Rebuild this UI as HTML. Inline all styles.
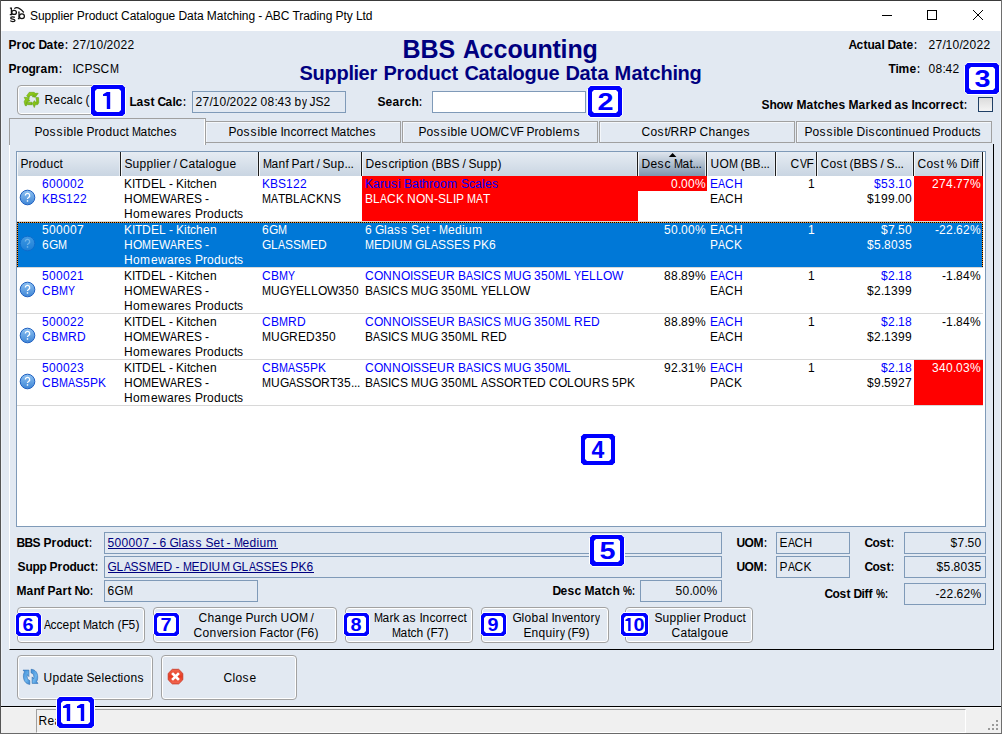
<!DOCTYPE html>
<html><head><meta charset="utf-8">
<style>
*{margin:0;padding:0;box-sizing:border-box}
html,body{width:1002px;height:734px;overflow:hidden;background:#E2E9F2;font-family:"Liberation Sans",sans-serif;font-size:12px;color:#000}
.a{position:absolute;white-space:pre}
.b{font-weight:bold}
.t,.c{position:absolute;white-space:nowrap;line-height:15px;height:16px;padding-top:1px}
.t{margin-left:-0.5px}
i{display:inline-block;font-style:normal;text-align:left}
.w1{width:1px}.w2{width:2px}.w3{width:3px}.w4{width:4px}.w5{width:5px}.w6{width:6px}.w7{width:7px}.w8{width:8px}.w9{width:9px}.w10{width:10px}.w11{width:11px}.w12{width:12px}.w13{width:13px}.w14{width:14px}.w15{width:15px}.w16{width:16px}.w17{width:17px}.w18{width:18px}.w19{width:19px}.w20{width:20px}.w21{width:21px}.w22{width:22px}.w23{width:23px}.w24{width:24px}.w25{width:25px}.w26{width:26px}.w27{width:27px}.w28{width:28px}.w29{width:29px}
.inp{position:absolute;border:1px solid #7F9AB8;background:#E2E9F2}
.btn{position:absolute;border:1px solid #A2A2A2;border-radius:4px;box-shadow:inset 0 0 0 1px #fff;background:#E2E9F2}
.lbl{position:absolute;width:34px;height:31px;padding:4px;color:#0000FF;font-weight:bold;font-size:23px;line-height:25px;text-align:center}
.lbl span{display:inline-block;transform:scaleX(1.25)}
.lbl.s{width:25px;height:23px;padding:3px;font-size:18px;line-height:18px}
.lbl.s span{transform:scaleX(1.1)}
.tab{position:absolute;top:121px;height:22px;border:1px solid #A0A0A0;box-shadow:inset 1px 1px 0 #F4F7FB}
.hd{position:absolute;top:152px;height:24px;background:linear-gradient(#E6ECF3,#C9D5E2);box-shadow:inset 1px 0 0 #F4F7FA,inset -1px 0 0 #E4EAF1}
.sep{position:absolute;top:152px;width:1px;height:24px;background:#1C1C1C}
</style></head><body>
<div class="a" style="left:0;top:0;width:1002px;height:1px;background:#3A3A3A"></div>
<div class="a" style="left:0;top:0;width:1px;height:734px;background:#555"></div>
<div class="a" style="left:1px;top:31px;width:1px;height:675px;background:#EDF2F8"></div>
<div class="a" style="left:1000px;top:31px;width:1px;height:675px;background:#EDF2F8"></div>
<div class="a" style="left:1001px;top:0;width:1px;height:734px;background:#6E6E6E"></div>
<div class="a" style="left:1px;top:1px;width:1000px;height:30px;background:#fff"></div>
<svg class="a" style="left:0;top:0" width="30" height="30" viewBox="0 0 30 30">
<g fill="none" stroke="#111" stroke-width="1.25">
<path d="M9.9 8.1H11.4V14.6H9.8"/>
<ellipse cx="14.1" cy="12.4" rx="2.3" ry="2.1"/>
<path d="M18.2 12.1H19V18.6H17.9"/>
<ellipse cx="21.9" cy="16.3" rx="2.5" ry="2.3"/>
<path d="M14.3 8.6Q17.8 5.6 23.8 12.5" stroke-width="1.15"/>
<path d="M14.8 17.4C13.5 16.6 10.6 16.6 10.7 18.1C10.8 19.4 15 18.9 15 20.4C15 21.9 11.2 21.8 10.3 20.6"/>
</g></svg>
<div class="a" style="left:30px;top:9px;line-height:14px;letter-spacing:-0.06px">Supplier Product Catalogue Data Matching - ABC Trading Pty Ltd</div>
<div class="a" style="left:882px;top:15px;width:10px;height:1px;background:#000"></div>
<div class="a" style="left:927px;top:10px;width:10px;height:10px;border:1px solid #000"></div>
<svg class="a" style="left:972px;top:9px" width="12" height="12" viewBox="0 0 12 12"><path d="M1 1L11 11M11 1L1 11" stroke="#000" stroke-width="1"/></svg>
<div class="t b" style="left:9px;top:37px;"><i class="w8">P</i><i class="w5">r</i><i class="w7">o</i><i class="w7">c</i><i class="w3">&nbsp;</i><i class="w8">D</i><i class="w7">a</i><i class="w4">t</i><i class="w7">e</i><i class="w3" style="transform:scaleX(0.750);transform-origin:0 0">:</i></div>
<div class="t" style="left:73px;top:37px;"><i class="w7">2</i><i class="w7">7</i><i class="w3">/</i><i class="w7">1</i><i class="w7">0</i><i class="w3">/</i><i class="w7">2</i><i class="w7">0</i><i class="w7">2</i><i class="w7">2</i></div>
<div class="t b" style="left:9px;top:61px;"><i class="w8">P</i><i class="w5">r</i><i class="w7">o</i><i class="w7">g</i><i class="w5">r</i><i class="w7">a</i><i class="w11">m</i><i class="w3" style="transform:scaleX(0.750);transform-origin:0 0">:</i></div>
<div class="t" style="left:73px;top:61px;"><i class="w3">I</i><i class="w9">C</i><i class="w8">P</i><i class="w8">S</i><i class="w9">C</i><i class="w9" style="transform:scaleX(0.900);transform-origin:0 0">M</i></div>
<div class="t b" style="left:403px;top:35px;color:#000080;font-size:25px;line-height:28px;height:28px;padding-top:0"><i class="w18">B</i><i class="w18">B</i><i class="w17">S</i><i class="w7">&nbsp;</i><i class="w17" style="transform:scaleX(0.942);transform-origin:0 0">A</i><i class="w14">c</i><i class="w14">c</i><i class="w15">o</i><i class="w15">u</i><i class="w15">n</i><i class="w8">t</i><i class="w7">i</i><i class="w15">n</i><i class="w15">g</i></div>
<div class="t b" style="left:300px;top:61px;color:#000080;font-size:20px;line-height:24px;height:24px;padding-top:0"><i class="w13">S</i><i class="w12">u</i><i class="w12">p</i><i class="w12">p</i><i class="w5">l</i><i class="w5">i</i><i class="w11">e</i><i class="w8">r</i><i class="w6">&nbsp;</i><i class="w13">P</i><i class="w8">r</i><i class="w12">o</i><i class="w12">d</i><i class="w12">u</i><i class="w11">c</i><i class="w7">t</i><i class="w6">&nbsp;</i><i class="w14">C</i><i class="w11">a</i><i class="w7">t</i><i class="w11">a</i><i class="w5">l</i><i class="w12">o</i><i class="w12">g</i><i class="w12">u</i><i class="w11">e</i><i class="w6">&nbsp;</i><i class="w14">D</i><i class="w11">a</i><i class="w7">t</i><i class="w11">a</i><i class="w6">&nbsp;</i><i class="w17">M</i><i class="w11">a</i><i class="w7">t</i><i class="w11">c</i><i class="w12">h</i><i class="w5">i</i><i class="w12">n</i><i class="w12">g</i></div>
<div class="t b" style="left:849px;top:37px;"><i class="w8">A</i><i class="w7">c</i><i class="w4">t</i><i class="w7">u</i><i class="w7">a</i><i class="w3">l</i><i class="w3">&nbsp;</i><i class="w8">D</i><i class="w7">a</i><i class="w4">t</i><i class="w7">e</i><i class="w3" style="transform:scaleX(0.750);transform-origin:0 0">:</i></div>
<div class="t" style="left:929px;top:37px;"><i class="w7">2</i><i class="w7">7</i><i class="w3">/</i><i class="w7">1</i><i class="w7">0</i><i class="w3">/</i><i class="w7">2</i><i class="w7">0</i><i class="w7">2</i><i class="w7">2</i></div>
<div class="t b" style="left:889px;top:61px;"><i class="w7">T</i><i class="w3">i</i><i class="w11">m</i><i class="w7">e</i><i class="w3" style="transform:scaleX(0.750);transform-origin:0 0">:</i></div>
<div class="t" style="left:929px;top:61px;"><i class="w7">0</i><i class="w7">8</i><i class="w3">:</i><i class="w7">4</i><i class="w7">2</i></div>
<div class="btn" style="left:17px;top:85px;width:80px;height:30px"></div>
<svg class="a" style="left:21px;top:89px" width="21" height="21" viewBox="21 89 21 21">
<defs><linearGradient id="rg" x1="0" y1="0" x2="1" y2="1"><stop offset="0" stop-color="#9BD21C"/><stop offset="1" stop-color="#6FB012"/></linearGradient></defs>
<g fill="url(#rg)" stroke="#5B9A10" stroke-width="0.5" stroke-linejoin="round">
<path d="M26.6 95.9L29.2 92.3H34.2L35.2 93.3H38.2L35.3 97.2L32.2 96.8L33.2 95.5H30.4L28.9 97.4Z"/>
<path d="M24.2 97.3L29.6 97.7L28.6 99.1L29.9 100.8L27.4 101.7L26.4 105.9L25.1 105.6L24.1 101.8L25.2 99.4Z"/>
<path d="M27.1 102.2H32.1V104.7H27.4Z"/>
<path d="M35.8 97.4L38.6 97.6L38.8 102.6L37.8 104.6L35.3 104.8L34.3 107.6L32.4 103.6L34.4 100.6L35.1 102.1L36.6 101.7Z"/>
</g></svg>
<div class="t" style="left:45px;top:92px;"><i class="w9">R</i><i class="w7">e</i><i class="w6">c</i><i class="w7">a</i><i class="w3">l</i><i class="w6">c</i><i class="w3">&nbsp;</i><i class="w4">(</i></div>
<svg class="a" style="left:90px;top:84px" width="36" height="33" viewBox="90 84 36 33"><path d="M93.5 84H122.5L126 87.5V113.5L122.5 117H93.5L90 113.5V87.5Z" fill="#fff"/><path d="M93.5 85H122.5L125 87.5V113.5L122.5 116H93.5L91 113.5V87.5Z" fill="#0000FF"/><path d="M97 89H119L121 91V110L119 112H97L95 110V91Z" fill="#fff"/></svg>
<div class="lbl" style="left:91px;top:85px"></div><svg class="a" style="left:91px;top:85px" width="34" height="31"><path d="M12 9.2L15.8 7H19.2V24H15.8V11H12Z" fill="#0000FF"/></svg>
<div class="t b" style="left:130px;top:94px;"><i class="w7">L</i><i class="w7">a</i><i class="w7">s</i><i class="w4">t</i><i class="w3">&nbsp;</i><i class="w8">C</i><i class="w7">a</i><i class="w3">l</i><i class="w7">c</i><i class="w3" style="transform:scaleX(0.750);transform-origin:0 0">:</i></div>
<div class="inp" style="left:192px;top:91px;width:154px;height:22px"></div>
<div class="t" style="left:196px;top:94px;"><i class="w7">2</i><i class="w7">7</i><i class="w3">/</i><i class="w7">1</i><i class="w7">0</i><i class="w3">/</i><i class="w7">2</i><i class="w7">0</i><i class="w7">2</i><i class="w7">2</i><i class="w3">&nbsp;</i><i class="w7">0</i><i class="w7">8</i><i class="w3">:</i><i class="w7">4</i><i class="w7">3</i><i class="w3">&nbsp;</i><i class="w7">b</i><i class="w5" style="transform:scaleX(0.833);transform-origin:0 0">y</i><i class="w3">&nbsp;</i><i class="w6">J</i><i class="w8">S</i><i class="w7">2</i></div>
<div class="t b" style="left:378px;top:94px;"><i class="w8">S</i><i class="w7">e</i><i class="w7">a</i><i class="w5">r</i><i class="w7">c</i><i class="w7">h</i><i class="w3" style="transform:scaleX(0.750);transform-origin:0 0">:</i></div>
<div class="inp" style="left:432px;top:91px;width:154px;height:22px;background:#fff"></div>
<svg class="a" style="left:587px;top:85px" width="36" height="33" viewBox="587 85 36 33"><path d="M590.5 85H619.5L623 88.5V114.5L619.5 118H590.5L587 114.5V88.5Z" fill="#fff"/><path d="M590.5 86H619.5L622 88.5V114.5L619.5 117H590.5L588 114.5V88.5Z" fill="#0000FF"/><path d="M594 90H616L618 92V111L616 113H594L592 111V92Z" fill="#fff"/></svg>
<div class="lbl" style="left:588px;top:86px"><span>2</span></div>
<svg class="a" style="left:964px;top:62px" width="36" height="33" viewBox="964 62 36 33"><path d="M967.5 62H996.5L1000 65.5V91.5L996.5 95H967.5L964 91.5V65.5Z" fill="#fff"/><path d="M967.5 63H996.5L999 65.5V91.5L996.5 94H967.5L965 91.5V65.5Z" fill="#0000FF"/><path d="M971 67H993L995 69V88L993 90H971L969 88V69Z" fill="#fff"/></svg>
<div class="lbl" style="left:965px;top:63px"><span>3</span></div>
<div class="t b" style="left:762px;top:97px;"><i class="w8">S</i><i class="w7">h</i><i class="w7">o</i><i class="w10">w</i><i class="w3">&nbsp;</i><i class="w10">M</i><i class="w7">a</i><i class="w4">t</i><i class="w7">c</i><i class="w7">h</i><i class="w7">e</i><i class="w7">s</i><i class="w3">&nbsp;</i><i class="w10">M</i><i class="w7">a</i><i class="w5">r</i><i class="w7">k</i><i class="w7">e</i><i class="w7">d</i><i class="w3">&nbsp;</i><i class="w7">a</i><i class="w7">s</i><i class="w3">&nbsp;</i><i class="w3">I</i><i class="w7">n</i><i class="w7">c</i><i class="w7">o</i><i class="w5">r</i><i class="w5">r</i><i class="w7">e</i><i class="w7">c</i><i class="w4">t</i><i class="w3" style="transform:scaleX(0.750);transform-origin:0 0">:</i></div>
<div class="a" style="left:978px;top:97px;width:15px;height:15px;border:1px solid #1F3F66;background:linear-gradient(#DCDCDC,#F4F4F4)"></div>
<div class="tab" style="left:205px;width:196px"></div>
<div class="t" style="left:229px;top:124px;"><i class="w8">P</i><i class="w7">o</i><i class="w7">s</i><i class="w7">s</i><i class="w3">i</i><i class="w7">b</i><i class="w3">l</i><i class="w7">e</i><i class="w3">&nbsp;</i><i class="w3">I</i><i class="w7">n</i><i class="w6">c</i><i class="w7">o</i><i class="w4">r</i><i class="w4">r</i><i class="w7">e</i><i class="w6">c</i><i class="w3">t</i><i class="w3">&nbsp;</i><i class="w9" style="transform:scaleX(0.900);transform-origin:0 0">M</i><i class="w7">a</i><i class="w3">t</i><i class="w6">c</i><i class="w7">h</i><i class="w7">e</i><i class="w7">s</i></div>
<div class="tab" style="left:402px;width:196px"></div>
<div class="t" style="left:419px;top:124px;"><i class="w8">P</i><i class="w7">o</i><i class="w7">s</i><i class="w7">s</i><i class="w3">i</i><i class="w7">b</i><i class="w3">l</i><i class="w7">e</i><i class="w3">&nbsp;</i><i class="w9">U</i><i class="w9">O</i><i class="w9" style="transform:scaleX(0.900);transform-origin:0 0">M</i><i class="w3">/</i><i class="w9">C</i><i class="w7" style="transform:scaleX(0.875);transform-origin:0 0">V</i><i class="w7">F</i><i class="w3">&nbsp;</i><i class="w8">P</i><i class="w4">r</i><i class="w7">o</i><i class="w7">b</i><i class="w3">l</i><i class="w7">e</i><i class="w11">m</i><i class="w7">s</i></div>
<div class="tab" style="left:599px;width:196px"></div>
<div class="t" style="left:642px;top:124px;"><i class="w9">C</i><i class="w7">o</i><i class="w7">s</i><i class="w3">t</i><i class="w3">/</i><i class="w9">R</i><i class="w9">R</i><i class="w8">P</i><i class="w3">&nbsp;</i><i class="w9">C</i><i class="w7">h</i><i class="w7">a</i><i class="w7">n</i><i class="w7">g</i><i class="w7">e</i><i class="w7">s</i></div>
<div class="tab" style="left:796px;width:196px"></div>
<div class="t" style="left:805px;top:124px;"><i class="w8">P</i><i class="w7">o</i><i class="w7">s</i><i class="w7">s</i><i class="w3">i</i><i class="w7">b</i><i class="w3">l</i><i class="w7">e</i><i class="w3">&nbsp;</i><i class="w9">D</i><i class="w3">i</i><i class="w7">s</i><i class="w6">c</i><i class="w7">o</i><i class="w7">n</i><i class="w3">t</i><i class="w3">i</i><i class="w7">n</i><i class="w7">u</i><i class="w7">e</i><i class="w7">d</i><i class="w3">&nbsp;</i><i class="w8">P</i><i class="w4">r</i><i class="w7">o</i><i class="w7">d</i><i class="w7">u</i><i class="w6">c</i><i class="w3">t</i><i class="w7">s</i></div>
<div class="a" style="left:9px;top:144px;width:985px;height:506px;border-left:1px solid #fff;border-right:1px solid #000;border-bottom:1px solid #000"></div>
<div class="a" style="left:9px;top:118px;width:197px;height:27px;border:1px solid #A0A0A0;border-bottom:none;background:#E2E9F2;box-shadow:inset -1px 0 0 #fff"></div>
<div class="a" style="left:10px;top:144px;width:194px;height:1px;background:#E2E9F2"></div>
<div class="a" style="left:9px;top:143px;width:1px;height:2px;background:#A0A0A0"></div>
<div class="t" style="left:35px;top:124px;"><i class="w8">P</i><i class="w7">o</i><i class="w7">s</i><i class="w7">s</i><i class="w3">i</i><i class="w7">b</i><i class="w3">l</i><i class="w7">e</i><i class="w3">&nbsp;</i><i class="w8">P</i><i class="w4">r</i><i class="w7">o</i><i class="w7">d</i><i class="w7">u</i><i class="w6">c</i><i class="w3">t</i><i class="w3">&nbsp;</i><i class="w9" style="transform:scaleX(0.900);transform-origin:0 0">M</i><i class="w7">a</i><i class="w3">t</i><i class="w6">c</i><i class="w7">h</i><i class="w7">e</i><i class="w7">s</i></div>
<div class="a" style="left:16px;top:151px;width:970px;height:376px;border:1px solid #7F9AB8;background:#fff"></div>
<div class="hd" style="left:17px;width:103px"></div>
<div class="sep" style="left:120px"></div>
<div class="t" style="left:21px;top:156px;"><i class="w8">P</i><i class="w4">r</i><i class="w7">o</i><i class="w7">d</i><i class="w7">u</i><i class="w6">c</i><i class="w3">t</i></div>
<div class="hd" style="left:121px;width:137px"></div>
<div class="sep" style="left:258px"></div>
<div class="t" style="left:125px;top:156px;"><i class="w8">S</i><i class="w7">u</i><i class="w7">p</i><i class="w7">p</i><i class="w3">l</i><i class="w3">i</i><i class="w7">e</i><i class="w4">r</i><i class="w3">&nbsp;</i><i class="w3">/</i><i class="w3">&nbsp;</i><i class="w9">C</i><i class="w7">a</i><i class="w3">t</i><i class="w7">a</i><i class="w3">l</i><i class="w7">o</i><i class="w7">g</i><i class="w7">u</i><i class="w7">e</i></div>
<div class="hd" style="left:259px;width:102px"></div>
<div class="sep" style="left:361px"></div>
<div class="t" style="left:263px;top:156px;"><i class="w9" style="transform:scaleX(0.900);transform-origin:0 0">M</i><i class="w7">a</i><i class="w7">n</i><i class="w3">f</i><i class="w3">&nbsp;</i><i class="w8">P</i><i class="w7">a</i><i class="w4">r</i><i class="w3">t</i><i class="w3">&nbsp;</i><i class="w3">/</i><i class="w3">&nbsp;</i><i class="w8">S</i><i class="w7">u</i><i class="w7">p</i><i class="w3">.</i><i class="w3">.</i><i class="w3">.</i></div>
<div class="hd" style="left:362px;width:275px"></div>
<div class="sep" style="left:637px"></div>
<div class="t" style="left:366px;top:156px;"><i class="w9">D</i><i class="w7">e</i><i class="w7">s</i><i class="w6">c</i><i class="w4">r</i><i class="w3">i</i><i class="w7">p</i><i class="w3">t</i><i class="w3">i</i><i class="w7">o</i><i class="w7">n</i><i class="w3">&nbsp;</i><i class="w4">(</i><i class="w8">B</i><i class="w8">B</i><i class="w8">S</i><i class="w3">&nbsp;</i><i class="w3">/</i><i class="w3">&nbsp;</i><i class="w8">S</i><i class="w7">u</i><i class="w7">p</i><i class="w7">p</i><i class="w4">)</i></div>
<div class="hd" style="left:638px;width:68px;background:linear-gradient(#E0E6EE,#B4C2D1 45%,#7F94AD)"></div>
<div class="sep" style="left:706px"></div>
<div class="t" style="left:642px;top:156px;"><i class="w9">D</i><i class="w7">e</i><i class="w7">s</i><i class="w6">c</i><i class="w3">&nbsp;</i><i class="w9" style="transform:scaleX(0.900);transform-origin:0 0">M</i><i class="w7">a</i><i class="w3">t</i><i class="w3">.</i><i class="w3">.</i><i class="w3">.</i></div>
<div class="hd" style="left:707px;width:68px"></div>
<div class="sep" style="left:775px"></div>
<div class="t" style="left:711px;top:156px;"><i class="w9">U</i><i class="w9">O</i><i class="w9" style="transform:scaleX(0.900);transform-origin:0 0">M</i><i class="w3">&nbsp;</i><i class="w4">(</i><i class="w8">B</i><i class="w8">B</i><i class="w3">.</i><i class="w3">.</i><i class="w3">.</i></div>
<div class="hd" style="left:776px;width:40px"></div>
<div class="sep" style="left:816px"></div>
<div class="t" style="left:791px;top:156px;"><i class="w9">C</i><i class="w7" style="transform:scaleX(0.875);transform-origin:0 0">V</i><i class="w7">F</i></div>
<div class="hd" style="left:817px;width:96px"></div>
<div class="sep" style="left:913px"></div>
<div class="t" style="left:821px;top:156px;"><i class="w9">C</i><i class="w7">o</i><i class="w7">s</i><i class="w3">t</i><i class="w3">&nbsp;</i><i class="w4">(</i><i class="w8">B</i><i class="w8">B</i><i class="w8">S</i><i class="w3">&nbsp;</i><i class="w3">/</i><i class="w3">&nbsp;</i><i class="w8">S</i><i class="w3">.</i><i class="w3">.</i><i class="w3">.</i></div>
<div class="hd" style="left:914px;width:68px"></div>
<div class="sep" style="left:982px"></div>
<div class="t" style="left:918px;top:156px;"><i class="w9">C</i><i class="w7">o</i><i class="w7">s</i><i class="w3">t</i><i class="w3">&nbsp;</i><i class="w11">%</i><i class="w3">&nbsp;</i><i class="w9">D</i><i class="w3">i</i><i class="w3">f</i><i class="w3">f</i></div>
<svg class="a" style="left:660px;top:150px" width="25" height="10" viewBox="660 150 25 10"><path d="M668.8 157H676.4L672.6 153Z" fill="#000"/></svg>
<div class="a" style="left:983px;top:152px;width:2px;height:374px;background:#fff"></div>
<div class="a" style="left:17px;top:221px;width:966px;height:1px;background:#D8D8D8"></div>
<div class="a" style="left:362px;top:176px;width:276px;height:45px;background:#FF0000"></div>
<div class="a" style="left:638px;top:176px;width:69px;height:15px;background:#FF0000"></div>
<div class="a" style="left:914px;top:176px;width:69px;height:45px;background:#FF0000"></div>
<svg class="a" style="left:19px;top:189px;" width="17" height="17" viewBox="0 0 17 17"><defs><linearGradient id="qg0" x1="0" y1="0" x2="0" y2="1"><stop offset="0" stop-color="#8EC2F2"/><stop offset="1" stop-color="#3F86D6"/></linearGradient></defs><circle cx="8.5" cy="8.5" r="7.3" fill="url(#qg0)" stroke="#1F5FC0" stroke-width="1"/><path d="M6.3 6.6a2.2 2.2 0 1 1 3.2 1.9c-0.8 0.4-1 0.8-1 1.6" fill="none" stroke="#fff" stroke-width="1.3"/><rect x="7.8" y="11.2" width="1.4" height="1.5" fill="#fff"/></svg>
<div class="c" style="left:42px;top:176px;color:#0000FF;"><i class="w7">6</i><i class="w7">0</i><i class="w7">0</i><i class="w7">0</i><i class="w7">0</i><i class="w7">2</i></div>
<div class="c" style="left:42px;top:191px;color:#0000FF;"><i class="w8">K</i><i class="w8">B</i><i class="w8">S</i><i class="w7">1</i><i class="w7">2</i><i class="w7">2</i></div>
<div class="c" style="left:124px;top:176px;color:#000;"><i class="w8">K</i><i class="w3">I</i><i class="w7">T</i><i class="w9">D</i><i class="w8">E</i><i class="w7">L</i><i class="w3">&nbsp;</i><i class="w4">-</i><i class="w3">&nbsp;</i><i class="w8">K</i><i class="w3">i</i><i class="w3">t</i><i class="w6">c</i><i class="w7">h</i><i class="w7">e</i><i class="w7">n</i></div>
<div class="c" style="left:124px;top:191px;color:#000;"><i class="w9">H</i><i class="w9">O</i><i class="w9" style="transform:scaleX(0.900);transform-origin:0 0">M</i><i class="w8">E</i><i class="w11">W</i><i class="w7" style="transform:scaleX(0.875);transform-origin:0 0">A</i><i class="w9">R</i><i class="w8">E</i><i class="w8">S</i><i class="w3">&nbsp;</i><i class="w4">-</i></div>
<div class="c" style="left:124px;top:206px;color:#000;"><i class="w9">H</i><i class="w7">o</i><i class="w11">m</i><i class="w7">e</i><i class="w9">w</i><i class="w7">a</i><i class="w4">r</i><i class="w7">e</i><i class="w7">s</i><i class="w3">&nbsp;</i><i class="w8">P</i><i class="w4">r</i><i class="w7">o</i><i class="w7">d</i><i class="w7">u</i><i class="w6">c</i><i class="w3">t</i><i class="w7">s</i></div>
<div class="c" style="left:262px;top:176px;color:#0000FF;"><i class="w8">K</i><i class="w8">B</i><i class="w8">S</i><i class="w7">1</i><i class="w7">2</i><i class="w7">2</i></div>
<div class="c" style="left:262px;top:191px;color:#000;"><i class="w9" style="transform:scaleX(0.900);transform-origin:0 0">M</i><i class="w7" style="transform:scaleX(0.875);transform-origin:0 0">A</i><i class="w7">T</i><i class="w8">B</i><i class="w7">L</i><i class="w7" style="transform:scaleX(0.875);transform-origin:0 0">A</i><i class="w9">C</i><i class="w8">K</i><i class="w9">N</i><i class="w8">S</i></div>
<div class="c" style="left:365px;top:176px;color:#0000FF;"><i class="w8">K</i><i class="w7">a</i><i class="w4">r</i><i class="w7">u</i><i class="w7">s</i><i class="w3">i</i><i class="w3">&nbsp;</i><i class="w8">B</i><i class="w7">a</i><i class="w3">t</i><i class="w7">h</i><i class="w4">r</i><i class="w7">o</i><i class="w7">o</i><i class="w11">m</i><i class="w3">&nbsp;</i><i class="w8">S</i><i class="w6">c</i><i class="w7">a</i><i class="w3">l</i><i class="w7">e</i><i class="w7">s</i></div>
<div class="c" style="left:365px;top:191px;color:#fff;"><i class="w8">B</i><i class="w7">L</i><i class="w7" style="transform:scaleX(0.875);transform-origin:0 0">A</i><i class="w9">C</i><i class="w8">K</i><i class="w3">&nbsp;</i><i class="w9">N</i><i class="w9">O</i><i class="w9">N</i><i class="w4">-</i><i class="w8">S</i><i class="w7">L</i><i class="w3">I</i><i class="w8">P</i><i class="w3">&nbsp;</i><i class="w9" style="transform:scaleX(0.900);transform-origin:0 0">M</i><i class="w7" style="transform:scaleX(0.875);transform-origin:0 0">A</i><i class="w7">T</i></div>
<div class="c" style="left:671px;top:176px;color:#fff;"><i class="w7">0</i><i class="w3">.</i><i class="w7">0</i><i class="w7">0</i><i class="w11">%</i></div>
<div class="c" style="left:710px;top:176px;color:#0000FF;"><i class="w8">E</i><i class="w7" style="transform:scaleX(0.875);transform-origin:0 0">A</i><i class="w9">C</i><i class="w9">H</i></div>
<div class="c" style="left:710px;top:191px;color:#000;"><i class="w8">E</i><i class="w7" style="transform:scaleX(0.875);transform-origin:0 0">A</i><i class="w9">C</i><i class="w9">H</i></div>
<div class="c" style="left:808px;top:176px;color:#000;"><i class="w7">1</i></div>
<div class="c" style="left:874px;top:176px;color:#0000FF;"><i class="w7">$</i><i class="w7">5</i><i class="w7">3</i><i class="w3">.</i><i class="w7">1</i><i class="w7">0</i></div>
<div class="c" style="left:867px;top:191px;color:#000;"><i class="w7">$</i><i class="w7">1</i><i class="w7">9</i><i class="w7">9</i><i class="w3">.</i><i class="w7">0</i><i class="w7">0</i></div>
<div class="c" style="left:932px;top:176px;color:#fff;"><i class="w7">2</i><i class="w7">7</i><i class="w7">4</i><i class="w3">.</i><i class="w7">7</i><i class="w7">7</i><i class="w11">%</i></div>
<div class="a" style="left:17px;top:267px;width:966px;height:1px;background:#D8D8D8"></div>
<div class="a" style="left:17px;top:222px;width:966px;height:45px;background:#0078D7"></div>
<svg class="a" style="left:19px;top:235px;opacity:0.45;" width="17" height="17" viewBox="0 0 17 17"><defs><linearGradient id="qg1" x1="0" y1="0" x2="0" y2="1"><stop offset="0" stop-color="#8EC2F2"/><stop offset="1" stop-color="#3F86D6"/></linearGradient></defs><circle cx="8.5" cy="8.5" r="7.3" fill="url(#qg1)" stroke="#1F5FC0" stroke-width="1"/><path d="M6.3 6.6a2.2 2.2 0 1 1 3.2 1.9c-0.8 0.4-1 0.8-1 1.6" fill="none" stroke="#fff" stroke-width="1.3"/><rect x="7.8" y="11.2" width="1.4" height="1.5" fill="#fff"/></svg>
<div class="c" style="left:42px;top:222px;color:#fff;"><i class="w7">5</i><i class="w7">0</i><i class="w7">0</i><i class="w7">0</i><i class="w7">0</i><i class="w7">7</i></div>
<div class="c" style="left:42px;top:237px;color:#fff;"><i class="w7">6</i><i class="w9">G</i><i class="w9" style="transform:scaleX(0.900);transform-origin:0 0">M</i></div>
<div class="c" style="left:124px;top:222px;color:#fff;"><i class="w8">K</i><i class="w3">I</i><i class="w7">T</i><i class="w9">D</i><i class="w8">E</i><i class="w7">L</i><i class="w3">&nbsp;</i><i class="w4">-</i><i class="w3">&nbsp;</i><i class="w8">K</i><i class="w3">i</i><i class="w3">t</i><i class="w6">c</i><i class="w7">h</i><i class="w7">e</i><i class="w7">n</i></div>
<div class="c" style="left:124px;top:237px;color:#fff;"><i class="w9">H</i><i class="w9">O</i><i class="w9" style="transform:scaleX(0.900);transform-origin:0 0">M</i><i class="w8">E</i><i class="w11">W</i><i class="w7" style="transform:scaleX(0.875);transform-origin:0 0">A</i><i class="w9">R</i><i class="w8">E</i><i class="w8">S</i><i class="w3">&nbsp;</i><i class="w4">-</i></div>
<div class="c" style="left:124px;top:252px;color:#fff;"><i class="w9">H</i><i class="w7">o</i><i class="w11">m</i><i class="w7">e</i><i class="w9">w</i><i class="w7">a</i><i class="w4">r</i><i class="w7">e</i><i class="w7">s</i><i class="w3">&nbsp;</i><i class="w8">P</i><i class="w4">r</i><i class="w7">o</i><i class="w7">d</i><i class="w7">u</i><i class="w6">c</i><i class="w3">t</i><i class="w7">s</i></div>
<div class="c" style="left:262px;top:222px;color:#fff;"><i class="w7">6</i><i class="w9">G</i><i class="w9" style="transform:scaleX(0.900);transform-origin:0 0">M</i></div>
<div class="c" style="left:262px;top:237px;color:#fff;"><i class="w9">G</i><i class="w7">L</i><i class="w7" style="transform:scaleX(0.875);transform-origin:0 0">A</i><i class="w8">S</i><i class="w8">S</i><i class="w9" style="transform:scaleX(0.900);transform-origin:0 0">M</i><i class="w8">E</i><i class="w9">D</i></div>
<div class="c" style="left:365px;top:222px;color:#fff;"><i class="w7">6</i><i class="w3">&nbsp;</i><i class="w9">G</i><i class="w3">l</i><i class="w7">a</i><i class="w7">s</i><i class="w7">s</i><i class="w3">&nbsp;</i><i class="w8">S</i><i class="w7">e</i><i class="w3">t</i><i class="w3">&nbsp;</i><i class="w4">-</i><i class="w3">&nbsp;</i><i class="w9" style="transform:scaleX(0.900);transform-origin:0 0">M</i><i class="w7">e</i><i class="w7">d</i><i class="w3">i</i><i class="w7">u</i><i class="w11">m</i></div>
<div class="c" style="left:365px;top:237px;color:#fff;"><i class="w9" style="transform:scaleX(0.900);transform-origin:0 0">M</i><i class="w8">E</i><i class="w9">D</i><i class="w3">I</i><i class="w9">U</i><i class="w9" style="transform:scaleX(0.900);transform-origin:0 0">M</i><i class="w3">&nbsp;</i><i class="w9">G</i><i class="w7">L</i><i class="w7" style="transform:scaleX(0.875);transform-origin:0 0">A</i><i class="w8">S</i><i class="w8">S</i><i class="w8">E</i><i class="w8">S</i><i class="w3">&nbsp;</i><i class="w8">P</i><i class="w8">K</i><i class="w7">6</i></div>
<div class="c" style="left:664px;top:222px;color:#fff;"><i class="w7">5</i><i class="w7">0</i><i class="w3">.</i><i class="w7">0</i><i class="w7">0</i><i class="w11">%</i></div>
<div class="c" style="left:710px;top:222px;color:#fff;"><i class="w8">E</i><i class="w7" style="transform:scaleX(0.875);transform-origin:0 0">A</i><i class="w9">C</i><i class="w9">H</i></div>
<div class="c" style="left:710px;top:237px;color:#fff;"><i class="w8">P</i><i class="w7" style="transform:scaleX(0.875);transform-origin:0 0">A</i><i class="w9">C</i><i class="w8">K</i></div>
<div class="c" style="left:808px;top:222px;color:#fff;"><i class="w7">1</i></div>
<div class="c" style="left:881px;top:222px;color:#fff;"><i class="w7">$</i><i class="w7">7</i><i class="w3">.</i><i class="w7">5</i><i class="w7">0</i></div>
<div class="c" style="left:867px;top:237px;color:#fff;"><i class="w7">$</i><i class="w7">5</i><i class="w3">.</i><i class="w7">8</i><i class="w7">0</i><i class="w7">3</i><i class="w7">5</i></div>
<div class="c" style="left:935px;top:222px;color:#fff;"><i class="w4">-</i><i class="w7">2</i><i class="w7">2</i><i class="w3">.</i><i class="w7">6</i><i class="w7">2</i><i class="w11">%</i></div>
<div class="a" style="left:17px;top:313px;width:966px;height:1px;background:#D8D8D8"></div>
<svg class="a" style="left:19px;top:281px;" width="17" height="17" viewBox="0 0 17 17"><defs><linearGradient id="qg2" x1="0" y1="0" x2="0" y2="1"><stop offset="0" stop-color="#8EC2F2"/><stop offset="1" stop-color="#3F86D6"/></linearGradient></defs><circle cx="8.5" cy="8.5" r="7.3" fill="url(#qg2)" stroke="#1F5FC0" stroke-width="1"/><path d="M6.3 6.6a2.2 2.2 0 1 1 3.2 1.9c-0.8 0.4-1 0.8-1 1.6" fill="none" stroke="#fff" stroke-width="1.3"/><rect x="7.8" y="11.2" width="1.4" height="1.5" fill="#fff"/></svg>
<div class="c" style="left:42px;top:268px;color:#0000FF;"><i class="w7">5</i><i class="w7">0</i><i class="w7">0</i><i class="w7">0</i><i class="w7">2</i><i class="w7">1</i></div>
<div class="c" style="left:42px;top:283px;color:#0000FF;"><i class="w9">C</i><i class="w8">B</i><i class="w9" style="transform:scaleX(0.900);transform-origin:0 0">M</i><i class="w7" style="transform:scaleX(0.875);transform-origin:0 0">Y</i></div>
<div class="c" style="left:124px;top:268px;color:#000;"><i class="w8">K</i><i class="w3">I</i><i class="w7">T</i><i class="w9">D</i><i class="w8">E</i><i class="w7">L</i><i class="w3">&nbsp;</i><i class="w4">-</i><i class="w3">&nbsp;</i><i class="w8">K</i><i class="w3">i</i><i class="w3">t</i><i class="w6">c</i><i class="w7">h</i><i class="w7">e</i><i class="w7">n</i></div>
<div class="c" style="left:124px;top:283px;color:#000;"><i class="w9">H</i><i class="w9">O</i><i class="w9" style="transform:scaleX(0.900);transform-origin:0 0">M</i><i class="w8">E</i><i class="w11">W</i><i class="w7" style="transform:scaleX(0.875);transform-origin:0 0">A</i><i class="w9">R</i><i class="w8">E</i><i class="w8">S</i><i class="w3">&nbsp;</i><i class="w4">-</i></div>
<div class="c" style="left:124px;top:298px;color:#000;"><i class="w9">H</i><i class="w7">o</i><i class="w11">m</i><i class="w7">e</i><i class="w9">w</i><i class="w7">a</i><i class="w4">r</i><i class="w7">e</i><i class="w7">s</i><i class="w3">&nbsp;</i><i class="w8">P</i><i class="w4">r</i><i class="w7">o</i><i class="w7">d</i><i class="w7">u</i><i class="w6">c</i><i class="w3">t</i><i class="w7">s</i></div>
<div class="c" style="left:262px;top:268px;color:#0000FF;"><i class="w9">C</i><i class="w8">B</i><i class="w9" style="transform:scaleX(0.900);transform-origin:0 0">M</i><i class="w7" style="transform:scaleX(0.875);transform-origin:0 0">Y</i></div>
<div class="c" style="left:262px;top:283px;color:#000;"><i class="w9" style="transform:scaleX(0.900);transform-origin:0 0">M</i><i class="w9">U</i><i class="w9">G</i><i class="w7" style="transform:scaleX(0.875);transform-origin:0 0">Y</i><i class="w8">E</i><i class="w7">L</i><i class="w7">L</i><i class="w9">O</i><i class="w11">W</i><i class="w7">3</i><i class="w7">5</i><i class="w7">0</i></div>
<div class="c" style="left:365px;top:268px;color:#0000FF;"><i class="w9">C</i><i class="w9">O</i><i class="w9">N</i><i class="w9">N</i><i class="w9">O</i><i class="w3">I</i><i class="w8">S</i><i class="w8">S</i><i class="w8">E</i><i class="w9">U</i><i class="w9">R</i><i class="w3">&nbsp;</i><i class="w8">B</i><i class="w7" style="transform:scaleX(0.875);transform-origin:0 0">A</i><i class="w8">S</i><i class="w3">I</i><i class="w9">C</i><i class="w8">S</i><i class="w3">&nbsp;</i><i class="w9" style="transform:scaleX(0.900);transform-origin:0 0">M</i><i class="w9">U</i><i class="w9">G</i><i class="w3">&nbsp;</i><i class="w7">3</i><i class="w7">5</i><i class="w7">0</i><i class="w9" style="transform:scaleX(0.900);transform-origin:0 0">M</i><i class="w7">L</i><i class="w3">&nbsp;</i><i class="w7" style="transform:scaleX(0.875);transform-origin:0 0">Y</i><i class="w8">E</i><i class="w7">L</i><i class="w7">L</i><i class="w9">O</i><i class="w11">W</i></div>
<div class="c" style="left:365px;top:283px;color:#000;"><i class="w8">B</i><i class="w7" style="transform:scaleX(0.875);transform-origin:0 0">A</i><i class="w8">S</i><i class="w3">I</i><i class="w9">C</i><i class="w8">S</i><i class="w3">&nbsp;</i><i class="w9" style="transform:scaleX(0.900);transform-origin:0 0">M</i><i class="w9">U</i><i class="w9">G</i><i class="w3">&nbsp;</i><i class="w7">3</i><i class="w7">5</i><i class="w7">0</i><i class="w9" style="transform:scaleX(0.900);transform-origin:0 0">M</i><i class="w7">L</i><i class="w3">&nbsp;</i><i class="w7" style="transform:scaleX(0.875);transform-origin:0 0">Y</i><i class="w8">E</i><i class="w7">L</i><i class="w7">L</i><i class="w9">O</i><i class="w11">W</i></div>
<div class="c" style="left:664px;top:268px;color:#000;"><i class="w7">8</i><i class="w7">8</i><i class="w3">.</i><i class="w7">8</i><i class="w7">9</i><i class="w11">%</i></div>
<div class="c" style="left:710px;top:268px;color:#0000FF;"><i class="w8">E</i><i class="w7" style="transform:scaleX(0.875);transform-origin:0 0">A</i><i class="w9">C</i><i class="w9">H</i></div>
<div class="c" style="left:710px;top:283px;color:#000;"><i class="w8">E</i><i class="w7" style="transform:scaleX(0.875);transform-origin:0 0">A</i><i class="w9">C</i><i class="w9">H</i></div>
<div class="c" style="left:808px;top:268px;color:#000;"><i class="w7">1</i></div>
<div class="c" style="left:881px;top:268px;color:#0000FF;"><i class="w7">$</i><i class="w7">2</i><i class="w3">.</i><i class="w7">1</i><i class="w7">8</i></div>
<div class="c" style="left:867px;top:283px;color:#000;"><i class="w7">$</i><i class="w7">2</i><i class="w3">.</i><i class="w7">1</i><i class="w7">3</i><i class="w7">9</i><i class="w7">9</i></div>
<div class="c" style="left:942px;top:268px;color:#000;"><i class="w4">-</i><i class="w7">1</i><i class="w3">.</i><i class="w7">8</i><i class="w7">4</i><i class="w11">%</i></div>
<div class="a" style="left:17px;top:359px;width:966px;height:1px;background:#D8D8D8"></div>
<svg class="a" style="left:19px;top:327px;" width="17" height="17" viewBox="0 0 17 17"><defs><linearGradient id="qg3" x1="0" y1="0" x2="0" y2="1"><stop offset="0" stop-color="#8EC2F2"/><stop offset="1" stop-color="#3F86D6"/></linearGradient></defs><circle cx="8.5" cy="8.5" r="7.3" fill="url(#qg3)" stroke="#1F5FC0" stroke-width="1"/><path d="M6.3 6.6a2.2 2.2 0 1 1 3.2 1.9c-0.8 0.4-1 0.8-1 1.6" fill="none" stroke="#fff" stroke-width="1.3"/><rect x="7.8" y="11.2" width="1.4" height="1.5" fill="#fff"/></svg>
<div class="c" style="left:42px;top:314px;color:#0000FF;"><i class="w7">5</i><i class="w7">0</i><i class="w7">0</i><i class="w7">0</i><i class="w7">2</i><i class="w7">2</i></div>
<div class="c" style="left:42px;top:329px;color:#0000FF;"><i class="w9">C</i><i class="w8">B</i><i class="w9" style="transform:scaleX(0.900);transform-origin:0 0">M</i><i class="w9">R</i><i class="w9">D</i></div>
<div class="c" style="left:124px;top:314px;color:#000;"><i class="w8">K</i><i class="w3">I</i><i class="w7">T</i><i class="w9">D</i><i class="w8">E</i><i class="w7">L</i><i class="w3">&nbsp;</i><i class="w4">-</i><i class="w3">&nbsp;</i><i class="w8">K</i><i class="w3">i</i><i class="w3">t</i><i class="w6">c</i><i class="w7">h</i><i class="w7">e</i><i class="w7">n</i></div>
<div class="c" style="left:124px;top:329px;color:#000;"><i class="w9">H</i><i class="w9">O</i><i class="w9" style="transform:scaleX(0.900);transform-origin:0 0">M</i><i class="w8">E</i><i class="w11">W</i><i class="w7" style="transform:scaleX(0.875);transform-origin:0 0">A</i><i class="w9">R</i><i class="w8">E</i><i class="w8">S</i><i class="w3">&nbsp;</i><i class="w4">-</i></div>
<div class="c" style="left:124px;top:344px;color:#000;"><i class="w9">H</i><i class="w7">o</i><i class="w11">m</i><i class="w7">e</i><i class="w9">w</i><i class="w7">a</i><i class="w4">r</i><i class="w7">e</i><i class="w7">s</i><i class="w3">&nbsp;</i><i class="w8">P</i><i class="w4">r</i><i class="w7">o</i><i class="w7">d</i><i class="w7">u</i><i class="w6">c</i><i class="w3">t</i><i class="w7">s</i></div>
<div class="c" style="left:262px;top:314px;color:#0000FF;"><i class="w9">C</i><i class="w8">B</i><i class="w9" style="transform:scaleX(0.900);transform-origin:0 0">M</i><i class="w9">R</i><i class="w9">D</i></div>
<div class="c" style="left:262px;top:329px;color:#000;"><i class="w9" style="transform:scaleX(0.900);transform-origin:0 0">M</i><i class="w9">U</i><i class="w9">G</i><i class="w9">R</i><i class="w8">E</i><i class="w9">D</i><i class="w7">3</i><i class="w7">5</i><i class="w7">0</i></div>
<div class="c" style="left:365px;top:314px;color:#0000FF;"><i class="w9">C</i><i class="w9">O</i><i class="w9">N</i><i class="w9">N</i><i class="w9">O</i><i class="w3">I</i><i class="w8">S</i><i class="w8">S</i><i class="w8">E</i><i class="w9">U</i><i class="w9">R</i><i class="w3">&nbsp;</i><i class="w8">B</i><i class="w7" style="transform:scaleX(0.875);transform-origin:0 0">A</i><i class="w8">S</i><i class="w3">I</i><i class="w9">C</i><i class="w8">S</i><i class="w3">&nbsp;</i><i class="w9" style="transform:scaleX(0.900);transform-origin:0 0">M</i><i class="w9">U</i><i class="w9">G</i><i class="w3">&nbsp;</i><i class="w7">3</i><i class="w7">5</i><i class="w7">0</i><i class="w9" style="transform:scaleX(0.900);transform-origin:0 0">M</i><i class="w7">L</i><i class="w3">&nbsp;</i><i class="w9">R</i><i class="w8">E</i><i class="w9">D</i></div>
<div class="c" style="left:365px;top:329px;color:#000;"><i class="w8">B</i><i class="w7" style="transform:scaleX(0.875);transform-origin:0 0">A</i><i class="w8">S</i><i class="w3">I</i><i class="w9">C</i><i class="w8">S</i><i class="w3">&nbsp;</i><i class="w9" style="transform:scaleX(0.900);transform-origin:0 0">M</i><i class="w9">U</i><i class="w9">G</i><i class="w3">&nbsp;</i><i class="w7">3</i><i class="w7">5</i><i class="w7">0</i><i class="w9" style="transform:scaleX(0.900);transform-origin:0 0">M</i><i class="w7">L</i><i class="w3">&nbsp;</i><i class="w9">R</i><i class="w8">E</i><i class="w9">D</i></div>
<div class="c" style="left:664px;top:314px;color:#000;"><i class="w7">8</i><i class="w7">8</i><i class="w3">.</i><i class="w7">8</i><i class="w7">9</i><i class="w11">%</i></div>
<div class="c" style="left:710px;top:314px;color:#0000FF;"><i class="w8">E</i><i class="w7" style="transform:scaleX(0.875);transform-origin:0 0">A</i><i class="w9">C</i><i class="w9">H</i></div>
<div class="c" style="left:710px;top:329px;color:#000;"><i class="w8">E</i><i class="w7" style="transform:scaleX(0.875);transform-origin:0 0">A</i><i class="w9">C</i><i class="w9">H</i></div>
<div class="c" style="left:808px;top:314px;color:#000;"><i class="w7">1</i></div>
<div class="c" style="left:881px;top:314px;color:#0000FF;"><i class="w7">$</i><i class="w7">2</i><i class="w3">.</i><i class="w7">1</i><i class="w7">8</i></div>
<div class="c" style="left:867px;top:329px;color:#000;"><i class="w7">$</i><i class="w7">2</i><i class="w3">.</i><i class="w7">1</i><i class="w7">3</i><i class="w7">9</i><i class="w7">9</i></div>
<div class="c" style="left:942px;top:314px;color:#000;"><i class="w4">-</i><i class="w7">1</i><i class="w3">.</i><i class="w7">8</i><i class="w7">4</i><i class="w11">%</i></div>
<div class="a" style="left:17px;top:405px;width:966px;height:1px;background:#D8D8D8"></div>
<div class="a" style="left:914px;top:360px;width:69px;height:45px;background:#FF0000"></div>
<svg class="a" style="left:19px;top:373px;" width="17" height="17" viewBox="0 0 17 17"><defs><linearGradient id="qg4" x1="0" y1="0" x2="0" y2="1"><stop offset="0" stop-color="#8EC2F2"/><stop offset="1" stop-color="#3F86D6"/></linearGradient></defs><circle cx="8.5" cy="8.5" r="7.3" fill="url(#qg4)" stroke="#1F5FC0" stroke-width="1"/><path d="M6.3 6.6a2.2 2.2 0 1 1 3.2 1.9c-0.8 0.4-1 0.8-1 1.6" fill="none" stroke="#fff" stroke-width="1.3"/><rect x="7.8" y="11.2" width="1.4" height="1.5" fill="#fff"/></svg>
<div class="c" style="left:42px;top:360px;color:#0000FF;"><i class="w7">5</i><i class="w7">0</i><i class="w7">0</i><i class="w7">0</i><i class="w7">2</i><i class="w7">3</i></div>
<div class="c" style="left:42px;top:375px;color:#0000FF;"><i class="w9">C</i><i class="w8">B</i><i class="w9" style="transform:scaleX(0.900);transform-origin:0 0">M</i><i class="w7" style="transform:scaleX(0.875);transform-origin:0 0">A</i><i class="w8">S</i><i class="w7">5</i><i class="w8">P</i><i class="w8">K</i></div>
<div class="c" style="left:124px;top:360px;color:#000;"><i class="w8">K</i><i class="w3">I</i><i class="w7">T</i><i class="w9">D</i><i class="w8">E</i><i class="w7">L</i><i class="w3">&nbsp;</i><i class="w4">-</i><i class="w3">&nbsp;</i><i class="w8">K</i><i class="w3">i</i><i class="w3">t</i><i class="w6">c</i><i class="w7">h</i><i class="w7">e</i><i class="w7">n</i></div>
<div class="c" style="left:124px;top:375px;color:#000;"><i class="w9">H</i><i class="w9">O</i><i class="w9" style="transform:scaleX(0.900);transform-origin:0 0">M</i><i class="w8">E</i><i class="w11">W</i><i class="w7" style="transform:scaleX(0.875);transform-origin:0 0">A</i><i class="w9">R</i><i class="w8">E</i><i class="w8">S</i><i class="w3">&nbsp;</i><i class="w4">-</i></div>
<div class="c" style="left:124px;top:390px;color:#000;"><i class="w9">H</i><i class="w7">o</i><i class="w11">m</i><i class="w7">e</i><i class="w9">w</i><i class="w7">a</i><i class="w4">r</i><i class="w7">e</i><i class="w7">s</i><i class="w3">&nbsp;</i><i class="w8">P</i><i class="w4">r</i><i class="w7">o</i><i class="w7">d</i><i class="w7">u</i><i class="w6">c</i><i class="w3">t</i><i class="w7">s</i></div>
<div class="c" style="left:262px;top:360px;color:#0000FF;"><i class="w9">C</i><i class="w8">B</i><i class="w9" style="transform:scaleX(0.900);transform-origin:0 0">M</i><i class="w7" style="transform:scaleX(0.875);transform-origin:0 0">A</i><i class="w8">S</i><i class="w7">5</i><i class="w8">P</i><i class="w8">K</i></div>
<div class="c" style="left:262px;top:375px;color:#000;"><i class="w9" style="transform:scaleX(0.900);transform-origin:0 0">M</i><i class="w9">U</i><i class="w9">G</i><i class="w7" style="transform:scaleX(0.875);transform-origin:0 0">A</i><i class="w8">S</i><i class="w8">S</i><i class="w9">O</i><i class="w9">R</i><i class="w7">T</i><i class="w7">3</i><i class="w7">5</i><i class="w3">.</i><i class="w3">.</i><i class="w3">.</i></div>
<div class="c" style="left:365px;top:360px;color:#0000FF;"><i class="w9">C</i><i class="w9">O</i><i class="w9">N</i><i class="w9">N</i><i class="w9">O</i><i class="w3">I</i><i class="w8">S</i><i class="w8">S</i><i class="w8">E</i><i class="w9">U</i><i class="w9">R</i><i class="w3">&nbsp;</i><i class="w8">B</i><i class="w7" style="transform:scaleX(0.875);transform-origin:0 0">A</i><i class="w8">S</i><i class="w3">I</i><i class="w9">C</i><i class="w8">S</i><i class="w3">&nbsp;</i><i class="w9" style="transform:scaleX(0.900);transform-origin:0 0">M</i><i class="w9">U</i><i class="w9">G</i><i class="w3">&nbsp;</i><i class="w7">3</i><i class="w7">5</i><i class="w7">0</i><i class="w9" style="transform:scaleX(0.900);transform-origin:0 0">M</i><i class="w7">L</i></div>
<div class="c" style="left:365px;top:375px;color:#000;"><i class="w8">B</i><i class="w7" style="transform:scaleX(0.875);transform-origin:0 0">A</i><i class="w8">S</i><i class="w3">I</i><i class="w9">C</i><i class="w8">S</i><i class="w3">&nbsp;</i><i class="w9" style="transform:scaleX(0.900);transform-origin:0 0">M</i><i class="w9">U</i><i class="w9">G</i><i class="w3">&nbsp;</i><i class="w7">3</i><i class="w7">5</i><i class="w7">0</i><i class="w9" style="transform:scaleX(0.900);transform-origin:0 0">M</i><i class="w7">L</i><i class="w3">&nbsp;</i><i class="w7" style="transform:scaleX(0.875);transform-origin:0 0">A</i><i class="w8">S</i><i class="w8">S</i><i class="w9">O</i><i class="w9">R</i><i class="w7">T</i><i class="w8">E</i><i class="w9">D</i><i class="w3">&nbsp;</i><i class="w9">C</i><i class="w9">O</i><i class="w7">L</i><i class="w9">O</i><i class="w9">U</i><i class="w9">R</i><i class="w8">S</i><i class="w3">&nbsp;</i><i class="w7">5</i><i class="w8">P</i><i class="w8">K</i></div>
<div class="c" style="left:664px;top:360px;color:#000;"><i class="w7">9</i><i class="w7">2</i><i class="w3">.</i><i class="w7">3</i><i class="w7">1</i><i class="w11">%</i></div>
<div class="c" style="left:710px;top:360px;color:#0000FF;"><i class="w8">E</i><i class="w7" style="transform:scaleX(0.875);transform-origin:0 0">A</i><i class="w9">C</i><i class="w9">H</i></div>
<div class="c" style="left:710px;top:375px;color:#000;"><i class="w8">P</i><i class="w7" style="transform:scaleX(0.875);transform-origin:0 0">A</i><i class="w9">C</i><i class="w8">K</i></div>
<div class="c" style="left:808px;top:360px;color:#000;"><i class="w7">1</i></div>
<div class="c" style="left:881px;top:360px;color:#0000FF;"><i class="w7">$</i><i class="w7">2</i><i class="w3">.</i><i class="w7">1</i><i class="w7">8</i></div>
<div class="c" style="left:867px;top:375px;color:#000;"><i class="w7">$</i><i class="w7">9</i><i class="w3">.</i><i class="w7">5</i><i class="w7">9</i><i class="w7">2</i><i class="w7">7</i></div>
<div class="c" style="left:932px;top:360px;color:#fff;"><i class="w7">3</i><i class="w7">4</i><i class="w7">0</i><i class="w3">.</i><i class="w7">0</i><i class="w7">3</i><i class="w11">%</i></div>
<div class="a" style="left:17px;top:222px;width:966px;height:45px;border:1px solid #F7901E;border-bottom:none"></div>
<div class="a" style="left:17px;top:222px;width:966px;height:45px;border:1px dotted #000;border-bottom:none"></div>
<svg class="a" style="left:580px;top:433px" width="36" height="33" viewBox="580 433 36 33"><path d="M583.5 433H612.5L616 436.5V462.5L612.5 466H583.5L580 462.5V436.5Z" fill="#fff"/><path d="M583.5 434H612.5L615 436.5V462.5L612.5 465H583.5L581 462.5V436.5Z" fill="#0000FF"/><path d="M587 438H609L611 440V459L609 461H587L585 459V440Z" fill="#fff"/></svg>
<div class="lbl" style="left:581px;top:434px"><span style="transform:scaleX(1.0)">4</span></div>
<div class="t b" style="left:17px;top:535px;"><i class="w8">B</i><i class="w8">B</i><i class="w8">S</i><i class="w3">&nbsp;</i><i class="w8">P</i><i class="w5">r</i><i class="w7">o</i><i class="w7">d</i><i class="w7">u</i><i class="w7">c</i><i class="w4">t</i><i class="w3" style="transform:scaleX(0.750);transform-origin:0 0">:</i></div>
<div class="inp" style="left:104px;top:532px;width:618px;height:22px"></div>
<div class="t" style="left:108px;top:535px;color:#000080;"><i class="w7">5</i><i class="w7">0</i><i class="w7">0</i><i class="w7">0</i><i class="w7">0</i><i class="w7">7</i><i class="w3">&nbsp;</i><i class="w4">-</i><i class="w3">&nbsp;</i><i class="w7">6</i><i class="w3">&nbsp;</i><i class="w9">G</i><i class="w3">l</i><i class="w7">a</i><i class="w7">s</i><i class="w7">s</i><i class="w3">&nbsp;</i><i class="w8">S</i><i class="w7">e</i><i class="w3">t</i><i class="w3">&nbsp;</i><i class="w4">-</i><i class="w3">&nbsp;</i><i class="w9" style="transform:scaleX(0.900);transform-origin:0 0">M</i><i class="w7">e</i><i class="w7">d</i><i class="w3">i</i><i class="w7">u</i><i class="w11">m</i></div>
<div class="a" style="left:108px;top:548px;width:170px;height:1px;background:#000080"></div>
<div class="t b" style="left:18px;top:559px;"><i class="w8">S</i><i class="w7">u</i><i class="w7">p</i><i class="w7">p</i><i class="w3">&nbsp;</i><i class="w8">P</i><i class="w5">r</i><i class="w7">o</i><i class="w7">d</i><i class="w7">u</i><i class="w7">c</i><i class="w4">t</i><i class="w3" style="transform:scaleX(0.750);transform-origin:0 0">:</i></div>
<div class="inp" style="left:104px;top:556px;width:618px;height:22px"></div>
<div class="t" style="left:108px;top:559px;color:#000080;"><i class="w9">G</i><i class="w7">L</i><i class="w7" style="transform:scaleX(0.875);transform-origin:0 0">A</i><i class="w8">S</i><i class="w8">S</i><i class="w9" style="transform:scaleX(0.900);transform-origin:0 0">M</i><i class="w8">E</i><i class="w9">D</i><i class="w3">&nbsp;</i><i class="w4">-</i><i class="w3">&nbsp;</i><i class="w9" style="transform:scaleX(0.900);transform-origin:0 0">M</i><i class="w8">E</i><i class="w9">D</i><i class="w3">I</i><i class="w9">U</i><i class="w9" style="transform:scaleX(0.900);transform-origin:0 0">M</i><i class="w3">&nbsp;</i><i class="w9">G</i><i class="w7">L</i><i class="w7" style="transform:scaleX(0.875);transform-origin:0 0">A</i><i class="w8">S</i><i class="w8">S</i><i class="w8">E</i><i class="w8">S</i><i class="w3">&nbsp;</i><i class="w8">P</i><i class="w8">K</i><i class="w7">6</i></div>
<div class="a" style="left:108px;top:572px;width:206px;height:1px;background:#000080"></div>
<div class="t b" style="left:17px;top:583px;"><i class="w10">M</i><i class="w7">a</i><i class="w7">n</i><i class="w4">f</i><i class="w3">&nbsp;</i><i class="w8">P</i><i class="w7">a</i><i class="w5">r</i><i class="w4">t</i><i class="w3">&nbsp;</i><i class="w8">N</i><i class="w7">o</i><i class="w3" style="transform:scaleX(0.750);transform-origin:0 0">:</i></div>
<div class="inp" style="left:104px;top:580px;width:154px;height:22px"></div>
<div class="t" style="left:108px;top:583px;"><i class="w7">6</i><i class="w9">G</i><i class="w9" style="transform:scaleX(0.900);transform-origin:0 0">M</i></div>
<svg class="a" style="left:589px;top:534px" width="36" height="33" viewBox="589 534 36 33"><path d="M592.5 534H621.5L625 537.5V563.5L621.5 567H592.5L589 563.5V537.5Z" fill="#fff"/><path d="M592.5 535H621.5L624 537.5V563.5L621.5 566H592.5L590 563.5V537.5Z" fill="#0000FF"/><path d="M596 539H618L620 541V560L618 562H596L594 560V541Z" fill="#fff"/></svg>
<div class="lbl" style="left:590px;top:535px"><span>5</span></div>
<div class="t b" style="left:737px;top:535px;"><i class="w8">U</i><i class="w9">O</i><i class="w10">M</i><i class="w3" style="transform:scaleX(0.750);transform-origin:0 0">:</i></div>
<div class="inp" style="left:776px;top:532px;width:74px;height:22px"></div>
<div class="t" style="left:780px;top:535px;"><i class="w8">E</i><i class="w7" style="transform:scaleX(0.875);transform-origin:0 0">A</i><i class="w9">C</i><i class="w9">H</i></div>
<div class="t b" style="left:737px;top:559px;"><i class="w8">U</i><i class="w9">O</i><i class="w10">M</i><i class="w3" style="transform:scaleX(0.750);transform-origin:0 0">:</i></div>
<div class="inp" style="left:776px;top:556px;width:74px;height:22px"></div>
<div class="t" style="left:780px;top:559px;"><i class="w8">P</i><i class="w7" style="transform:scaleX(0.875);transform-origin:0 0">A</i><i class="w9">C</i><i class="w8">K</i></div>
<div class="t b" style="left:865px;top:535px;"><i class="w8">C</i><i class="w7">o</i><i class="w7">s</i><i class="w4">t</i><i class="w3" style="transform:scaleX(0.750);transform-origin:0 0">:</i></div>
<div class="inp" style="left:904px;top:532px;width:82px;height:22px"></div>
<div class="t" style="left:951px;top:535px;"><i class="w7">$</i><i class="w7">7</i><i class="w3">.</i><i class="w7">5</i><i class="w7">0</i></div>
<div class="t b" style="left:865px;top:559px;"><i class="w8">C</i><i class="w7">o</i><i class="w7">s</i><i class="w4">t</i><i class="w3" style="transform:scaleX(0.750);transform-origin:0 0">:</i></div>
<div class="inp" style="left:904px;top:556px;width:82px;height:22px"></div>
<div class="t" style="left:937px;top:559px;"><i class="w7">$</i><i class="w7">5</i><i class="w3">.</i><i class="w7">8</i><i class="w7">0</i><i class="w7">3</i><i class="w7">5</i></div>
<div class="t b" style="left:553px;top:583px;"><i class="w8">D</i><i class="w7">e</i><i class="w7">s</i><i class="w7">c</i><i class="w3">&nbsp;</i><i class="w10">M</i><i class="w7">a</i><i class="w4">t</i><i class="w7">c</i><i class="w7">h</i><i class="w3">&nbsp;</i><i class="w9" style="transform:scaleX(0.843);transform-origin:0 0">%</i><i class="w3" style="transform:scaleX(0.750);transform-origin:0 0">:</i></div>
<div class="inp" style="left:640px;top:580px;width:82px;height:22px"></div>
<div class="t" style="left:676px;top:583px;"><i class="w7">5</i><i class="w7">0</i><i class="w3">.</i><i class="w7">0</i><i class="w7">0</i><i class="w11">%</i></div>
<div class="t b" style="left:825px;top:586px;"><i class="w8">C</i><i class="w7">o</i><i class="w7">s</i><i class="w4">t</i><i class="w3">&nbsp;</i><i class="w8">D</i><i class="w3">i</i><i class="w4">f</i><i class="w4">f</i><i class="w3">&nbsp;</i><i class="w9" style="transform:scaleX(0.843);transform-origin:0 0">%</i><i class="w3" style="transform:scaleX(0.750);transform-origin:0 0">:</i></div>
<div class="inp" style="left:904px;top:583px;width:82px;height:22px"></div>
<div class="t" style="left:936px;top:586px;"><i class="w4">-</i><i class="w7">2</i><i class="w7">2</i><i class="w3">.</i><i class="w7">6</i><i class="w7">2</i><i class="w11">%</i></div>
<div class="btn" style="left:17px;top:607px;width:128px;height:36px"></div>
<div class="t" style="left:44px;top:617px;"><i class="w7" style="transform:scaleX(0.875);transform-origin:0 0">A</i><i class="w6">c</i><i class="w6">c</i><i class="w7">e</i><i class="w7">p</i><i class="w3">t</i><i class="w3">&nbsp;</i><i class="w9" style="transform:scaleX(0.900);transform-origin:0 0">M</i><i class="w7">a</i><i class="w3">t</i><i class="w6">c</i><i class="w7">h</i><i class="w3">&nbsp;</i><i class="w4">(</i><i class="w7">F</i><i class="w7">5</i><i class="w4">)</i></div>
<svg class="a" style="left:15px;top:612px" width="27" height="25" viewBox="15 612 27 25"><path d="M18.5 612H38.5L42 615.5V633.5L38.5 637H18.5L15 633.5V615.5Z" fill="#fff"/><path d="M18.5 613H38.5L41 615.5V633.5L38.5 636H18.5L16 633.5V615.5Z" fill="#0000FF"/><path d="M21 616H36L38 618V631L36 633H21L19 631V618Z" fill="#fff"/></svg>
<div class="lbl s" style="left:16px;top:613px"><span>6</span></div>
<div class="btn" style="left:153px;top:607px;width:184px;height:36px"></div>
<div class="t" style="left:199px;top:610px;"><i class="w9">C</i><i class="w7">h</i><i class="w7">a</i><i class="w7">n</i><i class="w7">g</i><i class="w7">e</i><i class="w3">&nbsp;</i><i class="w8">P</i><i class="w7">u</i><i class="w4">r</i><i class="w6">c</i><i class="w7">h</i><i class="w3">&nbsp;</i><i class="w9">U</i><i class="w9">O</i><i class="w9" style="transform:scaleX(0.900);transform-origin:0 0">M</i><i class="w3">&nbsp;</i><i class="w3">/</i></div>
<div class="t" style="left:194px;top:625px;"><i class="w9">C</i><i class="w7">o</i><i class="w7">n</i><i class="w5" style="transform:scaleX(0.833);transform-origin:0 0">v</i><i class="w7">e</i><i class="w4">r</i><i class="w7">s</i><i class="w3">i</i><i class="w7">o</i><i class="w7">n</i><i class="w3">&nbsp;</i><i class="w7">F</i><i class="w7">a</i><i class="w6">c</i><i class="w3">t</i><i class="w7">o</i><i class="w4">r</i><i class="w3">&nbsp;</i><i class="w4">(</i><i class="w7">F</i><i class="w7">6</i><i class="w4">)</i></div>
<svg class="a" style="left:153px;top:612px" width="27" height="25" viewBox="153 612 27 25"><path d="M156.5 612H176.5L180 615.5V633.5L176.5 637H156.5L153 633.5V615.5Z" fill="#fff"/><path d="M156.5 613H176.5L179 615.5V633.5L176.5 636H156.5L154 633.5V615.5Z" fill="#0000FF"/><path d="M159 616H174L176 618V631L174 633H159L157 631V618Z" fill="#fff"/></svg>
<div class="lbl s" style="left:154px;top:613px"><span>7</span></div>
<div class="btn" style="left:345px;top:607px;width:128px;height:36px"></div>
<div class="t" style="left:374px;top:610px;"><i class="w9" style="transform:scaleX(0.900);transform-origin:0 0">M</i><i class="w7">a</i><i class="w4">r</i><i class="w6">k</i><i class="w3">&nbsp;</i><i class="w7">a</i><i class="w7">s</i><i class="w3">&nbsp;</i><i class="w3">I</i><i class="w7">n</i><i class="w6">c</i><i class="w7">o</i><i class="w4">r</i><i class="w4">r</i><i class="w7">e</i><i class="w6">c</i><i class="w3">t</i></div>
<div class="t" style="left:392px;top:625px;"><i class="w9" style="transform:scaleX(0.900);transform-origin:0 0">M</i><i class="w7">a</i><i class="w3">t</i><i class="w6">c</i><i class="w7">h</i><i class="w3">&nbsp;</i><i class="w4">(</i><i class="w7">F</i><i class="w7">7</i><i class="w4">)</i></div>
<svg class="a" style="left:343px;top:612px" width="27" height="25" viewBox="343 612 27 25"><path d="M346.5 612H366.5L370 615.5V633.5L366.5 637H346.5L343 633.5V615.5Z" fill="#fff"/><path d="M346.5 613H366.5L369 615.5V633.5L366.5 636H346.5L344 633.5V615.5Z" fill="#0000FF"/><path d="M349 616H364L366 618V631L364 633H349L347 631V618Z" fill="#fff"/></svg>
<div class="lbl s" style="left:344px;top:613px"><span>8</span></div>
<div class="btn" style="left:481px;top:607px;width:128px;height:36px"></div>
<div class="t" style="left:513px;top:610px;"><i class="w9">G</i><i class="w3">l</i><i class="w7">o</i><i class="w7">b</i><i class="w7">a</i><i class="w3">l</i><i class="w3">&nbsp;</i><i class="w3">I</i><i class="w7">n</i><i class="w5" style="transform:scaleX(0.833);transform-origin:0 0">v</i><i class="w7">e</i><i class="w7">n</i><i class="w3">t</i><i class="w7">o</i><i class="w4">r</i><i class="w5" style="transform:scaleX(0.833);transform-origin:0 0">y</i></div>
<div class="t" style="left:524px;top:625px;"><i class="w8">E</i><i class="w7">n</i><i class="w7">q</i><i class="w7">u</i><i class="w3">i</i><i class="w4">r</i><i class="w5" style="transform:scaleX(0.833);transform-origin:0 0">y</i><i class="w3">&nbsp;</i><i class="w4">(</i><i class="w7">F</i><i class="w7">9</i><i class="w4">)</i></div>
<svg class="a" style="left:480px;top:612px" width="27" height="25" viewBox="480 612 27 25"><path d="M483.5 612H503.5L507 615.5V633.5L503.5 637H483.5L480 633.5V615.5Z" fill="#fff"/><path d="M483.5 613H503.5L506 615.5V633.5L503.5 636H483.5L481 633.5V615.5Z" fill="#0000FF"/><path d="M486 616H501L503 618V631L501 633H486L484 631V618Z" fill="#fff"/></svg>
<div class="lbl s" style="left:481px;top:613px"><span>9</span></div>
<div class="btn" style="left:625px;top:607px;width:128px;height:36px"></div>
<div class="t" style="left:655px;top:610px;"><i class="w8">S</i><i class="w7">u</i><i class="w7">p</i><i class="w7">p</i><i class="w3">l</i><i class="w3">i</i><i class="w7">e</i><i class="w4">r</i><i class="w3">&nbsp;</i><i class="w8">P</i><i class="w4">r</i><i class="w7">o</i><i class="w7">d</i><i class="w7">u</i><i class="w6">c</i><i class="w3">t</i></div>
<div class="t" style="left:672px;top:625px;"><i class="w9">C</i><i class="w7">a</i><i class="w3">t</i><i class="w7">a</i><i class="w3">l</i><i class="w7">g</i><i class="w7">o</i><i class="w7">u</i><i class="w7">e</i></div>
<svg class="a" style="left:620px;top:612px" width="29" height="25" viewBox="620 612 29 25"><path d="M623.5 612H645.5L649 615.5V633.5L645.5 637H623.5L620 633.5V615.5Z" fill="#fff"/><path d="M623.5 613H645.5L648 615.5V633.5L645.5 636H623.5L621 633.5V615.5Z" fill="#0000FF"/><path d="M626 616H643L645 618V631L643 633H626L624 631V618Z" fill="#fff"/></svg>
<div class="lbl s" style="left:621px;top:613px;width:27px"></div>
<svg class="a" style="left:621px;top:613px" width="27" height="23"><path d="M4.4 6.8L7.2 5H9.6V18H7.2V8H4.4Z" fill="#0000FF"/></svg><div class="a b" style="left:634px;top:613px;width:12px;height:23px;font-size:18px;line-height:24px;color:#0000FF;transform:scaleX(1.1)">0</div>
<div class="btn" style="left:17px;top:655px;width:136px;height:45px"></div>
<svg class="a" style="left:19px;top:666px" width="24" height="24" viewBox="19 666 24 24">
<defs><linearGradient id="ug" x1="0" y1="0" x2="1" y2="1"><stop offset="0" stop-color="#3D8CD6"/><stop offset="0.6" stop-color="#6DB5EE"/><stop offset="1" stop-color="#3B86CF"/></linearGradient></defs>
<g fill="url(#ug)" stroke="#2B6CB0" stroke-width="0.6" stroke-linejoin="round">
<path d="M23 670.1H28.9V676.6L27.4 674.6C26.6 677.6 27.6 680.1 29.8 680.6V684.4C25.6 684 23.2 680.2 23.4 675.5C23.5 673.8 24 672.6 24.6 671.9L23 670.1Z"/>
<path d="M31.1 669.3C35.2 669.4 37.8 672.8 37.7 677.2C37.7 679.3 37.3 680.6 36.6 681.6L38 683.4H32.1V676.9L33.6 678.8C34.4 676 33.6 673.3 31.1 672.9Z"/>
</g></svg>
<div class="t" style="left:44px;top:670px;"><i class="w9">U</i><i class="w7">p</i><i class="w7">d</i><i class="w7">a</i><i class="w3">t</i><i class="w7">e</i><i class="w3">&nbsp;</i><i class="w8">S</i><i class="w7">e</i><i class="w3">l</i><i class="w7">e</i><i class="w6">c</i><i class="w3">t</i><i class="w3">i</i><i class="w7">o</i><i class="w7">n</i><i class="w7">s</i></div>
<div class="btn" style="left:161px;top:655px;width:136px;height:45px"></div>
<svg class="a" style="left:162px;top:666px" width="24" height="24" viewBox="162 666 24 24">
<defs><linearGradient id="cg" x1="0" y1="0" x2="0" y2="1"><stop offset="0" stop-color="#F0674F"/><stop offset="0.5" stop-color="#E63B22"/><stop offset="1" stop-color="#F26B55"/></linearGradient></defs>
<path d="M172.3 669.3H178.7L182.8 673.4V679.8L178.7 683.9H172.3L168.2 679.8V673.4Z" fill="url(#cg)" stroke="#C8321F" stroke-width="0.8"/>
<path d="M173 674L178 679M178 674L173 679" stroke="#fff" stroke-width="2.6" stroke-linecap="square"/>
</svg>
<div class="t" style="left:224px;top:670px;"><i class="w9">C</i><i class="w3">l</i><i class="w7">o</i><i class="w7">s</i><i class="w7">e</i></div>
<div class="a" style="left:1px;top:706px;width:1000px;height:27px;background:#F0F0F0;border-top:1px solid #000"></div>
<div class="a" style="left:36px;top:709px;width:930px;height:24px;border-top:1px solid #A0A0A0;border-left:1px solid #A0A0A0;border-right:1px solid #fff;border-bottom:1px solid #fff"></div>
<div class="a" style="left:1px;top:707px;width:1000px;height:1px;background:#FAFAFA"></div>
<div class="t" style="left:39px;top:713px;"><i class="w9">R</i><i class="w7">e</i><i class="w7">a</i><i class="w7">d</i><i class="w5" style="transform:scaleX(0.833);transform-origin:0 0">y</i></div>
<div class="a" style="left:996px;top:720px;width:2px;height:2px;background:#9A9A9A;box-shadow:0 4px #9A9A9A,-4px 4px #9A9A9A,0 8px #9A9A9A,-4px 8px #9A9A9A,-8px 8px #9A9A9A"></div>
<svg class="a" style="left:56px;top:696px" width="39" height="33" viewBox="56 696 39 33"><path d="M59.5 696H91.5L95 699.5V725.5L91.5 729H59.5L56 725.5V699.5Z" fill="#fff"/><path d="M59.5 697H91.5L94 699.5V725.5L91.5 728H59.5L57 725.5V699.5Z" fill="#0000FF"/><path d="M63 701H88L90 703V722L88 724H63L61 722V703Z" fill="#fff"/></svg>
<div class="lbl" style="left:57px;top:697px;width:37px"></div><svg class="a" style="left:57px;top:697px" width="37" height="31"><path d="M6 9.2L9.8 7H13.2V24H9.8V11H6Z" fill="#0000FF"/><path d="M20 9.2L23.8 7H27.2V24H23.8V11H20Z" fill="#0000FF"/></svg>
<div class="a" style="left:0;top:733px;width:1002px;height:1px;background:#6A6A6A"></div>
</body></html>
